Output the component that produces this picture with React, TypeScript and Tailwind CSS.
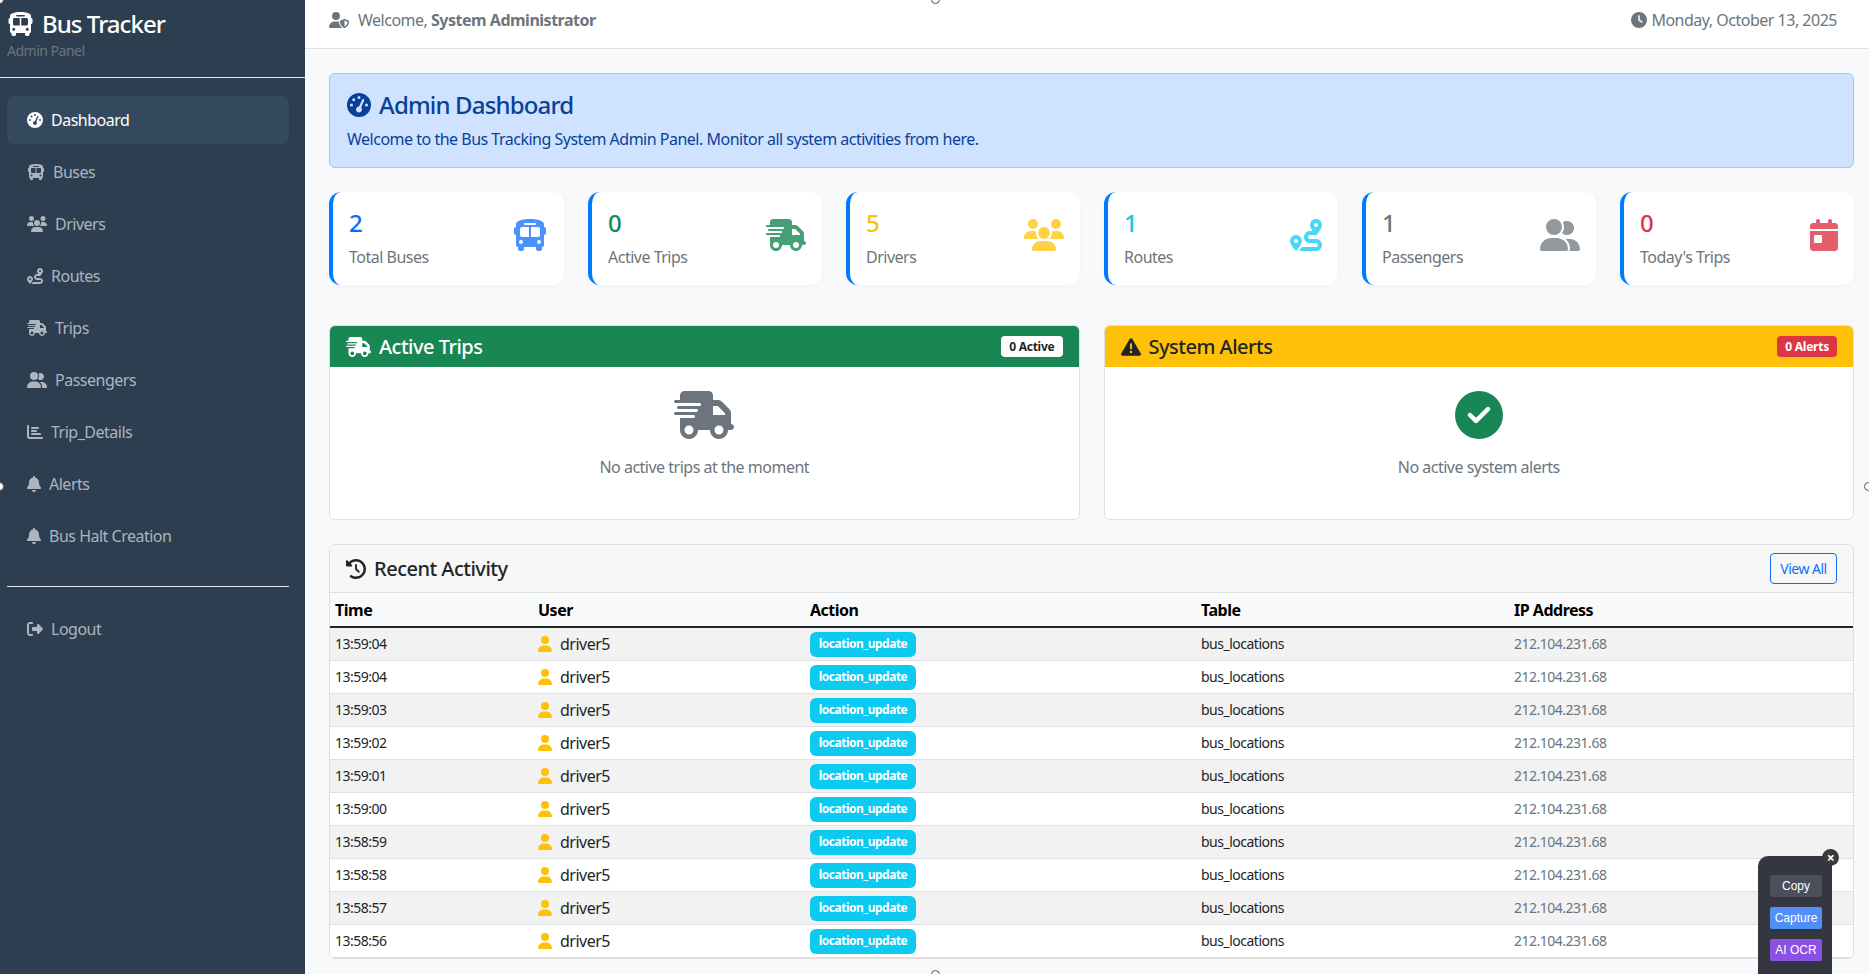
import React from "react";
import {
  FaBus, FaGaugeHigh, FaUsers, FaRoute, FaTruckFast, FaUserGroup, FaChartBar, FaBell,
  FaRightFromBracket, FaUserShield, FaClock, FaCalendarDay, FaCircleCheck,
  FaTriangleExclamation, FaClockRotateLeft, FaUser,
} from "react-icons/fa6";

const nav = [
  { label: "Buses", Icon: FaBus, w: "w-[1.125em]" },
  { label: "Drivers", Icon: FaUsers, w: "w-[1.25em]" },
  { label: "Routes", Icon: FaRoute, w: "w-[1em]" },
  { label: "Trips", Icon: FaTruckFast, w: "w-[1.25em]" },
  { label: "Passengers", Icon: FaUserGroup, w: "w-[1.25em]" },
  { label: "Trip_Details", Icon: FaChartBar, w: "w-[1em]" },
  { label: "Alerts", Icon: FaBell, w: "w-[0.875em]" },
  { label: "Bus Halt Creation", Icon: FaBell, w: "w-[0.875em]" },
];

const stats = [
  { n: "2", label: "Total Buses", Icon: FaBus, w: "w-[1.125em]", num: "text-[#0d6efd]", ic: "text-[#0d6efd]/75" },
  { n: "0", label: "Active Trips", Icon: FaTruckFast, w: "w-[1.25em]", num: "text-[#198754]", ic: "text-[#198754]/80" },
  { n: "5", label: "Drivers", Icon: FaUsers, w: "w-[1.25em]", num: "text-[#ffc107]", ic: "text-[#ffc107]/75" },
  { n: "1", label: "Routes", Icon: FaRoute, w: "w-[1em]", num: "text-[#0dcaf0]", ic: "text-[#0dcaf0]/75" },
  { n: "1", label: "Passengers", Icon: FaUserGroup, w: "w-[1.25em]", num: "text-[#6c757d]", ic: "text-[#6c757d]/75" },
  { n: "0", label: "Today's Trips", Icon: FaCalendarDay, w: "w-[0.875em]", num: "text-[#dc3545]", ic: "text-[#dc3545]/80" },
];

const times = ["13:59:04", "13:59:04", "13:59:03", "13:59:02", "13:59:01", "13:59:00", "13:58:59", "13:58:58", "13:58:57", "13:58:56"];

function Stat({ n, label, Icon, w, num, ic }: (typeof stats)[number]) {
  return (
    <div className="flex h-[93px] items-center justify-between rounded-[12px] border-l-4 border-[#007bff] bg-white pl-[16px] pr-[16px] shadow-[0_1px_4px_rgba(0,0,0,0.03)]">
      <div>
        <div className={`text-[24px] font-medium leading-[29px] ${num}`}>{n}</div>
        <div className="mt-[8px] text-[16px] leading-[24px] text-[#6c757d]">{label}</div>
      </div>
      <Icon className={`-mt-[7px] h-[32px] text-[32px] ${w} ${ic}`} />
    </div>
  );
}

export default function App() {
  return (
    <div className="relative flex h-screen overflow-hidden bg-[#f8f9fa] font-['Noto_Sans',sans-serif] text-[16px] tracking-[-0.031em] text-[#212529]">
      <aside className="flex w-[305px] shrink-0 flex-col bg-[#2c3e50]">
        <div className="h-[78px] border-b border-[#dfe3e6] px-[7px] pt-[9px]">
          <div className="flex items-center gap-[8px] text-[24px] font-medium leading-[30px] tracking-[-0.04em] text-white">
            <FaBus className="h-[24px] w-[1.125em]" />
            <span>Bus Tracker</span>
          </div>
          <div className="mt-[2px] text-[14px] leading-[20px] text-[#6c757d]">Admin Panel</div>
        </div>
        <nav className="pl-[7px] pr-[16px] pt-[18px]">
          <div className="flex h-[48px] items-center gap-[8px] rounded-[6px] bg-[#34495e] pl-[20px] text-white">
            <FaGaugeHigh className="text-[16px]" />
            <span>Dashboard</span>
          </div>
          <div className="mt-[4px] flex flex-col gap-[4px]">
            {nav.map(({ label, Icon, w }) => (
              <div key={label} className="flex h-[48px] items-center gap-[8px] pl-[20px] text-[#adb5bd]">
                <Icon className={`h-[1em] ${w}`} />
                <span>{label}</span>
              </div>
            ))}
          </div>
          <div className="mt-[26px] border-t border-[#dfe3e6]" />
          <div className="mt-[18px] flex h-[48px] items-center gap-[8px] pl-[20px] text-[#adb5bd]">
            <FaRightFromBracket className="text-[16px]" />
            <span>Logout</span>
          </div>
        </nav>
      </aside>

      <main className="min-w-0 flex-1">
        <header className="flex h-[49px] items-start justify-between border-b border-[#dee2e6] bg-white pl-[24px] pr-[32px] pt-[8px] leading-[24px] text-[#6c757d]">
          <div className="flex items-center gap-[9px]">
            <FaUserShield className="h-[1em] w-[1.25em]" />
            <span>Welcome, <strong className="font-bold">System Administrator</strong></span>
          </div>
          <div className="flex items-center gap-[4px]">
            <FaClock />
            <span>Monday, October 13, 2025</span>
          </div>
        </header>

        <div className="pl-[24px] pr-[15px] pt-[24px]">
          <div className="h-[95px] rounded-[6px] border border-[#9ec5fe] bg-[#cfe2ff] px-[17px] pt-[16px] text-[#084298]">
            <div className="flex items-center gap-[8px] text-[24px] font-medium leading-[29px] tracking-[-0.035em]">
              <FaGaugeHigh />
              <span>Admin Dashboard</span>
            </div>
            <p className="mt-[8px] leading-[24px]">Welcome to the Bus Tracking System Admin Panel. Monitor all system activities from here.</p>
          </div>

          <div className="mt-[24px] grid grid-cols-[235px_234px_234px_234px_234px_1fr] gap-[24px]">
            {stats.map((s) => <Stat key={s.label} {...s} />)}
          </div>

          <div className="mt-[40px] grid grid-cols-2 gap-[24px]">
            <section className="h-[195px] overflow-hidden rounded-[6px] border border-[#dfdfdf] bg-white">
              <div className="flex h-[41px] items-center justify-between bg-[#198754] pl-[16px] pr-[16px] text-white">
                <div className="flex items-center gap-[8px] text-[20px] font-medium">
                  <FaTruckFast className="h-[1em] w-[1.25em]" />
                  <span>Active Trips</span>
                </div>
                <span className="flex h-[21px] items-center rounded-[4px] bg-white px-[8px] text-[12px] font-bold tracking-[-0.02em] text-[#212529]">0 Active</span>
              </div>
              <div className="flex flex-col items-center pt-[24px] text-[#6c757d]">
                <FaTruckFast className="h-[48px] w-[60px]" />
                <p className="mt-[16px] leading-[24px]">No active trips at the moment</p>
              </div>
            </section>
            <section className="h-[195px] overflow-hidden rounded-[6px] border border-[#dfdfdf] bg-white">
              <div className="flex h-[41px] items-center justify-between bg-[#ffc107] pl-[16px] pr-[16px] text-[#212529]">
                <div className="flex items-center gap-[8px] text-[20px] font-medium">
                  <FaTriangleExclamation />
                  <span>System Alerts</span>
                </div>
                <span className="flex h-[21px] items-center rounded-[4px] bg-[#dc3545] px-[8px] text-[12px] font-bold tracking-[-0.02em] text-white">0 Alerts</span>
              </div>
              <div className="flex flex-col items-center pt-[24px] text-[#6c757d]">
                <FaCircleCheck className="text-[48px] text-[#198754]" />
                <p className="mt-[16px] leading-[24px]">No active system alerts</p>
              </div>
            </section>
          </div>

          <section className="mt-[24px] overflow-hidden rounded-[6px] border border-[#dfdfdf]">
            <div className="flex h-[48px] items-center justify-between border-b border-[#dfdfdf] bg-[#f7f7f7] px-[16px]">
              <div className="flex items-center gap-[8px] text-[20px] font-medium">
                <FaClockRotateLeft />
                <span>Recent Activity</span>
              </div>
              <button className="h-[31px] w-[67px] rounded-[4px] border border-[#0d6efd] text-[14px] text-[#0d6efd]">View All</button>
            </div>
            <table className="w-full table-fixed border-collapse text-left">
              <thead>
                <tr className="h-[34px] border-b-2 border-[#212529] font-bold text-black">
                  <th className="w-[203px] px-[5px]">Time</th>
                  <th className="w-[272px] px-[5px]">User</th>
                  <th className="w-[391px] px-[5px]">Action</th>
                  <th className="w-[313px] px-[5px]">Table</th>
                  <th className="px-[5px]">IP Address</th>
                </tr>
              </thead>
              <tbody>
                {times.map((t, i) => (
                  <tr key={i} className={`h-[33px] border-b border-[#dee2e6] text-[14px] ${i % 2 === 0 ? "bg-[#f2f2f2]" : "bg-white"}`}>
                    <td className="px-[5px]">{t}</td>
                    <td className="px-[5px]">
                      <div className="flex items-center gap-[8px] text-[16px]">
                        <FaUser className="h-[16px] w-[14px] text-[#ffc107]" />
                        <span>driver5</span>
                      </div>
                    </td>
                    <td className="px-[5px]">
                      <span className="mt-[1px] inline-flex h-[25px] w-[106px] items-center justify-center rounded-[6px] bg-[#0dcaf0] text-[12px] font-bold text-white">location_update</span>
                    </td>
                    <td className="px-[5px]">bus_locations</td>
                    <td className="px-[5px] text-[#6c757d]">212.104.231.68</td>
                  </tr>
                ))}
              </tbody>
            </table>
          </section>
        </div>
      </main>

      <div className="absolute left-[1758px] top-[856px] flex h-[140px] w-[74px] flex-col items-center gap-[10px] rounded-[10px] bg-[#343640] pl-[2px] pt-[19px] font-['Liberation_Sans',sans-serif] text-[12px] tracking-normal text-white">
        <span className="flex h-[22px] w-[52px] items-center justify-center rounded-[2px] bg-[#4b4e5b]">Copy</span>
        <span className="flex h-[22px] w-[52px] items-center justify-center rounded-[2px] bg-[#4f8ff7]">Capture</span>
        <span className="flex h-[22px] w-[52px] items-center justify-center rounded-[2px] bg-[#8b50e6]">AI OCR</span>
      </div>
      <span className="absolute left-[1822px] top-[849px] flex h-[17px] w-[17px] items-center justify-center rounded-full bg-[#3a3a3a] text-[14px] font-bold leading-none text-white">×</span>

      <span className="absolute left-[931px] top-[-5px] h-[9px] w-[9px] rounded-full border border-[#555] bg-white" />
      <span className="absolute left-[931px] top-[970px] h-[9px] w-[9px] rounded-full border border-[#555] bg-white" />
      <span className="absolute left-[-5px] top-[482px] h-[9px] w-[9px] rounded-full border border-[#555] bg-white" />
      <span className="absolute left-[1864px] top-[482px] h-[9px] w-[9px] rounded-full border border-[#555] bg-white" />
      <span className="absolute left-[-5px] top-[-5px] h-[9px] w-[9px] rounded-full border border-[#555] bg-white" />
    </div>
  );
}
